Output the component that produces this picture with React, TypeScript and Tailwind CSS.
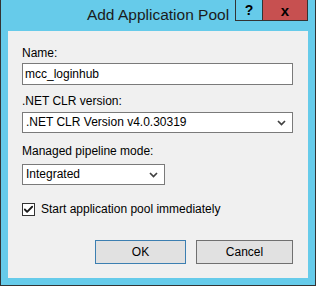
import { Check } from 'lucide-react'

function Chevron() {
  return (
    <svg width="9" height="6" viewBox="0 0 9 6" className="shrink-0">
      <path d="M1 1 L4.5 4.5 L8 1" fill="none" stroke="#404040" strokeWidth="1.7" />
    </svg>
  )
}

function Select({ value, width }: { value: string; width: string }) {
  return (
    <div className={`flex h-[21px] items-center justify-between border border-[#7a7a7a] bg-white pl-[3px] pr-[6px] ${width}`}>
      <span>{value}</span>
      <Chevron />
    </div>
  )
}

export default function App() {
  return (
    <div
      className="flex h-[286px] w-[316px] flex-col border-x border-b border-[#333333] bg-[#66cbea] px-[7px] pb-[7px] text-[12px] leading-[15px] text-black"
      style={{ fontFamily: '"Liberation Sans", Arial, sans-serif' }}
    >
      {/* title bar */}
      <div className="relative h-[31px] shrink-0">
        <div className="pt-[6px] text-center text-[15.5px] leading-[18px] text-[#1b1b1b]">Add Application Pool</div>
        <div className="absolute right-0 top-0 flex h-[21px]">
          <div className="flex w-[28px] items-center justify-center border-x border-b border-[#333333] text-[14px] font-bold">?</div>
          <div className="-ml-px flex w-[46px] items-center justify-center border-x border-b border-[#333333] bg-[#c75050] text-[15px] font-bold leading-none">
            x
          </div>
        </div>
      </div>

      {/* client area */}
      <div className="flex flex-1 flex-col bg-[#f0f0f0] pl-[14px] pr-[15px]">
        <div className="mt-[15px]">Name:</div>
        <div className="mt-[2px] flex h-[22px] items-center border border-[#7a7a7a] bg-white px-[2px]">mcc_loginhub</div>

        <div className="mt-[9px]">.NET CLR version:</div>
        <div className="mt-[3px]">
          <Select value=".NET CLR Version v4.0.30319" width="w-full" />
        </div>

        <div className="mt-[11px]">Managed pipeline mode:</div>
        <div className="mt-[5px]">
          <Select value="Integrated" width="w-[143px]" />
        </div>

        <div className="mt-[17px] flex items-center gap-[6px]">
          <div className="flex h-[13px] w-[13px] items-center justify-center border border-[#333333] bg-white">
            <Check size={11} strokeWidth={4} color="#1a1a1a" />
          </div>
          <span>Start application pool immediately</span>
        </div>

        <div className="mt-[23px] flex justify-end gap-[10px]">
          <button className="flex h-[24px] w-[91px] items-center justify-center border border-[#3c7fb1] bg-[#e1e1e1]">OK</button>
          <button className="flex h-[24px] w-[97px] items-center justify-center border border-[#707070] bg-[#e1e1e1]">Cancel</button>
        </div>
      </div>
    </div>
  )
}
